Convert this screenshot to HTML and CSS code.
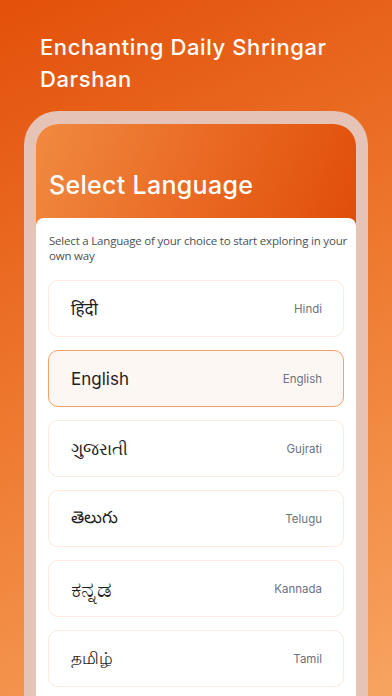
FILE: index.html
```html
<!DOCTYPE html>
<html lang="en">
<head>
  <meta charset="UTF-8">
  <meta name="viewport" content="width=device-width, initial-scale=1.0">
  <title>Select Language</title>
  <link rel="stylesheet" href="styles.css">
</head>
<body>
  <div class="screen">
    <h1 class="headline">Enchanting Daily Shringar Darshan</h1>
    <div class="phone">
      <div class="phone-inner">
        <div class="hero">
          <h2>Select Language</h2>
        </div>
        <div class="sheet">
          <p class="intro">Select a Language of your choice to start exploring in your own way</p>
          <div class="lang-list">
            <div class="lang"><span class="native">हिंदी</span><span class="label">Hindi</span></div>
            <div class="lang active"><span class="native">English</span><span class="label">English</span></div>
            <div class="lang"><span class="native">ગુજરાતી</span><span class="label">Gujrati</span></div>
            <div class="lang"><span class="native">తెలుగు</span><span class="label">Telugu</span></div>
            <div class="lang"><span class="native native-kn">ಕನ್ನಡ</span><span class="label">Kannada</span></div>
            <div class="lang"><span class="native">தமிழ்</span><span class="label">Tamil</span></div>
          </div>
        </div>
      </div>
    </div>
  </div>
</body>
</html>
```

FILE: styles.css
```css
* {
  box-sizing: border-box;
}
body {
  margin: 0;
  font-family: Inter, "Noto Sans", "DejaVu Sans", sans-serif;
}
.screen {
  width: 392px;
  height: 696px;
  overflow: hidden;
  background: linear-gradient(155deg, #e3500a 0%, #ee7a30 50%, #f7a461 100%);
  padding: 31px 0 0 24px;
}
.headline {
  margin: 0 0 16px 16px;
  color: #fff;
  font-size: 22px;
  font-weight: 500;
  line-height: 32px;
  letter-spacing: 0.6px;
  width: 320px;
}
.phone {
  width: 344px;
  height: 640px;
  padding: 13px 12px 0;
  border-radius: 34px 34px 0 0;
  background: #e6c3b7;
}
.phone-inner {
  height: 100%;
  border-radius: 22px 22px 0 0;
  overflow: hidden;
  background: #fff;
}
.hero {
  height: 102px;
  padding: 45px 0 0 13px;
  background: linear-gradient(110deg, #f08a40 0%, #ea6a24 50%, #e04e08 100%);
}
.hero h2 {
  margin: 0;
  color: #fff;
  font-size: 25px;
  font-weight: 500;
  line-height: 32px;
  letter-spacing: 0.3px;
}
.sheet {
  margin-top: -8px;
  background: #fff;
  border-radius: 8px 8px 0 0;
  padding: 15px 12px 0;
}
.intro {
  margin: 0 -4px 17px 1px;
  font-family: "Open Sans", "Noto Sans", sans-serif;
  font-size: 11.5px;
  line-height: 15px;
  letter-spacing: -0.2px;
  color: #4b4f58;
}
.lang-list {
  display: flex;
  flex-direction: column;
  gap: 13px;
}
.lang {
  height: 57px;
  display: flex;
  align-items: center;
  justify-content: space-between;
  padding: 0 21px 0 22px;
  border: 1px solid #fde9de;
  border-radius: 10px;
  background: #fff;
}
.lang.active {
  background: #fdf7f3;
  border-color: #f4a06c;
}
.native {
  font-size: 17px;
  color: #1f1f1f;
}
.native-kn {
  font-size: 23px;
}
.label {
  font-size: 11.5px;
  color: #6b7280;
}
```
